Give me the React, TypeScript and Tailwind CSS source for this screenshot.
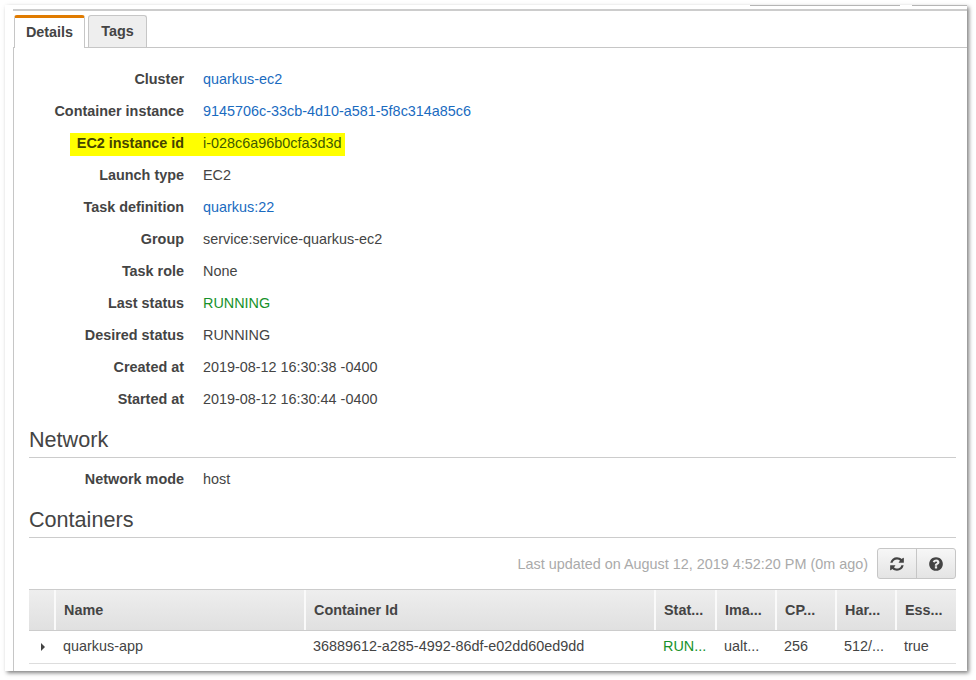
type Row = { label: string; value: string; tone?: "link" | "ok"; mark?: boolean };

const rows: Row[] = [
  { label: "Cluster", value: "quarkus-ec2", tone: "link" },
  { label: "Container instance", value: "9145706c-33cb-4d10-a581-5f8c314a85c6", tone: "link" },
  { label: "EC2 instance id", value: "i-028c6a96b0cfa3d3d", mark: true },
  { label: "Launch type", value: "EC2" },
  { label: "Task definition", value: "quarkus:22", tone: "link" },
  { label: "Group", value: "service:service-quarkus-ec2" },
  { label: "Task role", value: "None" },
  { label: "Last status", value: "RUNNING", tone: "ok" },
  { label: "Desired status", value: "RUNNING" },
  { label: "Created at", value: "2019-08-12 16:30:38 -0400" },
  { label: "Started at", value: "2019-08-12 16:30:44 -0400" },
];

const columns = [
  { title: "Name", width: "w-[250px]", value: "quarkus-app" },
  { title: "Container Id", width: "w-[350px]", value: "36889612-a285-4992-86df-e02dd60ed9dd" },
  { title: "Stat...", width: "w-[61px]", value: "RUN...", ok: true },
  { title: "Ima...", width: "w-[60px]", value: "ualt..." },
  { title: "CP...", width: "w-[60px]", value: "256" },
  { title: "Har...", width: "w-[60px]", value: "512/..." },
  { title: "Ess...", width: "w-[59px]", value: "true" },
];

function DetailRow({ row }: { row: Row }) {
  const toneClass =
    row.tone === "link"
      ? "text-[#1a6bbf]"
      : row.tone === "ok"
        ? "text-[#16922a]"
        : row.mark
          ? "text-[#3f5a00]"
          : "";
  return (
    <div className={`flex h-[32px] items-center ${row.mark ? "pl-[56px]" : ""}`}>
      <div className={row.mark ? "flex h-[23px] w-[275px] items-center bg-[#ffff00]" : "flex items-center"}>
        <div
          className={
            row.mark
              ? "w-[114px] text-right font-bold text-[#444400]"
              : "w-[170px] text-right font-bold"
          }
        >
          {row.label}
        </div>
        <div className={`ml-[19px] ${toneClass}`}>{row.value}</div>
      </div>
    </div>
  );
}

export default function App() {
  return (
    <div className="h-[680px] w-[976px] overflow-hidden bg-white pl-[5px] pt-[5px] font-['Liberation_Sans',Arial,sans-serif] text-[14.4px] text-[#444444]">
      <div className="h-[666px] w-[962px] bg-white pl-[8px] shadow-[2px_2px_4px_0px_rgba(0,0,0,0.5)]">
        {/* cut-off buttons above the panel */}
        <div className="flex h-[4px] items-start">
          <div className="ml-[737px] h-[1px] w-[150px] bg-[#b5b5b5]" />
          <div className="ml-[12px] h-[1px] w-[55px] bg-[#b5b5b5]" />
        </div>
        <div className="h-[39px] border-t-2 border-[#cccccc]">
          {/* Tabs */}
          <div className="flex h-[37px] items-end gap-[3px] border-b border-[#c6c6c6]">
            <div className="mb-[-1px] ml-[1px] flex h-[33px] w-[71px] items-center justify-center rounded-t-[3px] border-x border-t-[3px] border-[#c6c6c6] border-t-[#e07b00] bg-white pb-[1px] font-bold">
              Details
            </div>
            <div className="flex h-[32px] w-[59px] items-center justify-center rounded-t-[3px] border border-b-0 border-[#c6c6c6] bg-[#eeeeee] pt-[1px] font-bold">
              Tags
            </div>
          </div>
        </div>

        <div className="h-[623px] border-l border-[#c6c6c6] pl-[15px]">
          {/* Details */}
          <div className="-ml-[15px] pt-[16px]">
            {rows.map((row) => (
              <DetailRow key={row.label} row={row} />
            ))}
          </div>

          <h2 className="mt-[7px] h-[35px] w-[927px] border-b border-[#cccccc] text-[21.6px] leading-[34px]">
            Network
          </h2>
          <div className="-ml-[15px] mt-[6px]">
            <DetailRow row={{ label: "Network mode", value: "host" }} />
          </div>

          <h2 className="mt-[7px] h-[35px] w-[927px] border-b border-[#cccccc] text-[21.6px] leading-[34px]">
            Containers
          </h2>

          {/* Toolbar */}
          <div className="mt-[10px] flex w-[927px] items-center justify-end gap-[9px]">
            <span className="pt-[2px] text-[#aaaaaa]">Last updated on August 12, 2019 4:52:20 PM (0m ago)</span>
            <div className="flex h-[31px] w-[79px] rounded-[3px] border border-[#c6c6c6] bg-gradient-to-b from-[#f7f7f7] to-[#e4e4e4] text-[#444444]">
              <div className="flex w-[39px] items-center justify-center border-r border-[#c6c6c6]">
                <svg width="16" height="16" viewBox="0 0 1792 1792" fill="currentColor">
                  <path d="M1639 1056q0 5-1 7-64 268-268 434.500t-478 166.500q-146 0-282.500-55t-243.500-157l-129 129q-19 19-45 19t-45-19-19-45v-448q0-26 19-45t45-19h448q26 0 45 19t19 45-19 45l-137 137q71 66 161 102t187 36q134 0 250-65t186-179q11-17 53-117 8-23 30-23h192q13 0 22.500 9.500t9.500 22.500zm25-800v448q0 26-19 45t-45 19h-448q-26 0-45-19t-19-45 19-45l138-138q-148-137-349-137-134 0-250 65t-186 179q-11 17-53 117-8 23-30 23h-199q-13 0-22.500-9.500t-9.500-22.500v-7q65-268 270-434.500t480-166.500q146 0 284 55.500t245 156.500l130-129q19-19 45-19t45 19 19 45z" />
                </svg>
              </div>
              <div className="flex flex-1 items-center justify-center">
                <svg width="16" height="16" viewBox="0 0 1792 1792" fill="currentColor">
                  <path d="M1024 1376v-192q0-14-9-23t-23-9h-192q-14 0-23 9t-9 23v192q0 14 9 23t23 9h192q14 0 23-9t9-23zm256-672q0-88-55.500-163t-138.500-116-170-41q-243 0-371 213-15 24 8 42l132 100q7 6 19 6 16 0 25-12 53-68 86-92 34-24 86-24 48 0 85.500 26t37.500 59q0 38-20 61t-68 45q-63 28-115.500 86.500t-52.500 125.500v36q0 14 9 23t23 9h192q14 0 23-9t9-23q0-19 21.500-49.500t54.500-49.500q32-18 49-28.500t46-35 44.500-48 28-60.500 12.500-81zm384 192q0 209-103 385.500t-279.500 279.500-385.500 103-385.500-103-279.500-279.500-103-385.500 103-385.500 279.500-279.500 385.500-103 385.500 103 279.500 279.500 103 385.500z" />
                </svg>
              </div>
            </div>
          </div>

          {/* Table */}
          <div className="mt-[10px] w-[927px]">
            <div className="flex h-[42px] border-y border-[#cccccc] bg-gradient-to-b from-[#eeeeee] to-[#e0e0e0] font-bold">
              <div className="w-[27px] border-r-2 border-[#fafafa]" />
              {columns.map((col, i) => (
                <div
                  key={col.title}
                  className={`flex items-center pl-[8px] pt-[1px] ${col.width} ${i < columns.length - 1 ? "border-r-2 border-[#fafafa]" : ""}`}
                >
                  {col.title}
                </div>
              ))}
            </div>
            <div className="flex h-[33px] items-center border-b border-[#dddddd]">
              <div className="flex w-[27px] items-center justify-center">
                <svg width="6" height="8" viewBox="0 0 6 8" className="ml-[1px]">
                  <path d="M1 0 L5 4 L1 8 Z" fill="#444444" />
                </svg>
              </div>
              {columns.map((col) => (
                <div
                  key={col.title}
                  className={`pl-[7px] ${col.width} ${col.ok ? "text-[#16922a]" : ""}`}
                >
                  {col.value}
                </div>
              ))}
            </div>
          </div>
        </div>
      </div>
    </div>
  );
}
